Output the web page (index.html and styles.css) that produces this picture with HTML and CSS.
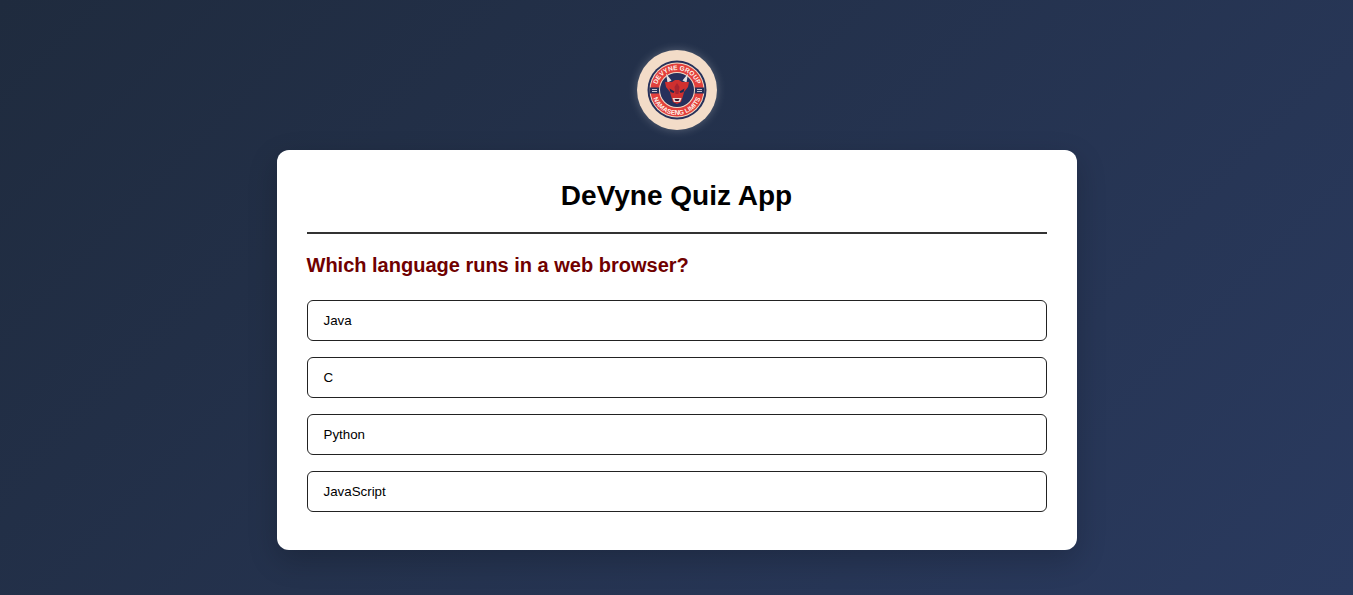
FILE: index.html
```html
<!DOCTYPE html>
<html lang="en">
<head>
<meta charset="utf-8">
<title>DeVyne Quiz App</title>
<link rel="stylesheet" href="styles.css">
</head>
<body>
<main class="page">
  <div class="logo">
    <svg class="logo-art" viewBox="0 0 80 80" width="80" height="80" aria-label="DeVyne Group logo">
      <defs>
        <path id="arc-top" d="M19 41a21 21 0 0 1 42 0"/>
        <path id="arc-bottom" d="M15 40a25 25 0 0 0 50 0"/>
      </defs>
      <circle cx="40" cy="40" r="29.500" fill="#26305a"/>
      <circle cx="40" cy="40" r="27.500" fill="#f3dcc8"/>
      <circle cx="40" cy="40" r="26.500" fill="#e2403c"/>
      <path d="M12.500 37.500h10.500v6h-10.500zM57 37.500h10.500v6h-10.500z" fill="#26305a"/>
      <path d="M15 39h5v1h-5zM15 41h5v1h-5zM60 39h5v1h-5zM60 41h5v1h-5z" fill="#c9c4cc"/>
      <circle cx="40" cy="40" r="18" fill="#f3dcc8"/>
      <circle cx="40" cy="40" r="17" fill="#27305c"/>
      <text class="logo-text"><textPath href="#arc-top" startOffset="50%" text-anchor="middle">DEVYNE GROUP</textPath></text>
      <text class="logo-text"><textPath href="#arc-bottom" startOffset="50%" text-anchor="middle">NAMASENG LIMITS</textPath></text>
      <path d="M29 23.500l1.500 9 4-2zM51 23.500l-1.500 9-4-2z" fill="#e4e0e0"/>
      <path d="M28 32l7 0 3-2h4l3 2 7 0-1 5-4 5-1 4-2 6-4 2-4-2-2-6-1-4-4-5z" fill="#d0302f"/>
      <path d="M40 33l2.500 4-1 7h-3l-1-7z" fill="#a82430"/>
      <path d="M32.500 38.500l5 3-1 1.500-3-1zM47.500 38.500l-5 3 1 1.500 3-1z" fill="#1c2a50"/>
      <path d="M35.500 48h9l-1.500 4h-6z" fill="#eed8d0"/>
      <path d="M37.500 49h5l-1 2h-3z" fill="#3a1530"/>
    </svg>
  </div>
  <section class="card">
    <h1 class="title">DeVyne Quiz App</h1>
    <h2 class="question">Which language runs in a web browser?</h2>
    <div class="options">
      <button class="option" type="button">Java</button>
      <button class="option" type="button">C</button>
      <button class="option" type="button">Python</button>
      <button class="option" type="button">JavaScript</button>
    </div>
  </section>
</main>
</body>
</html>
```
FILE: styles.css
```css
* {
  box-sizing: border-box;
}

html,
body {
  height: 100%;
}

body {
  margin: 0;
  background: linear-gradient(135deg, #1f2b3e 0%, #2a3a5f 100%);
  font-family: "Liberation Sans", Arial, sans-serif;
  overflow: hidden;
}

.page {
  display: flex;
  flex-direction: column;
  align-items: center;
  padding-top: 50px;
}

.logo {
  width: 80px;
  height: 80px;
  margin-bottom: 20px;
  border-radius: 50%;
  background: #f3dcc8;
  box-shadow: 0 0 10px rgba(255, 255, 255, 0.25);
}

.logo-art {
  display: block;
}

.logo-text {
  font-family: "Liberation Sans", Arial, sans-serif;
  font-size: 6.500px;
  font-weight: 700;
  fill: #fff4ec;
}

.card {
  width: 800px;
  height: 400px;
  padding: 30px;
  background: #fff;
  border-radius: 12px;
  box-shadow: 0 10px 30px rgba(0, 0, 0, 0.2);
}

.title {
  margin: 0 0 20px;
  padding-bottom: 20px;
  border-bottom: 2px solid #333;
  font-size: 28px;
  line-height: 32px;
  font-weight: 700;
  text-align: center;
  color: #000;
}

.question {
  margin: 0 0 23px;
  font-size: 20px;
  line-height: 23px;
  font-weight: 700;
  color: #700000;
}

.options {
  display: flex;
  flex-direction: column;
  gap: 16px;
}

.option {
  width: 100%;
  padding: 12px 16px;
  background: #fff;
  border: 1px solid #222;
  border-radius: 6px;
  font-family: Arial, "Liberation Sans", sans-serif;
  font-size: 13.333px;
  line-height: 15px;
  text-align: left;
  color: #000;
}
```
